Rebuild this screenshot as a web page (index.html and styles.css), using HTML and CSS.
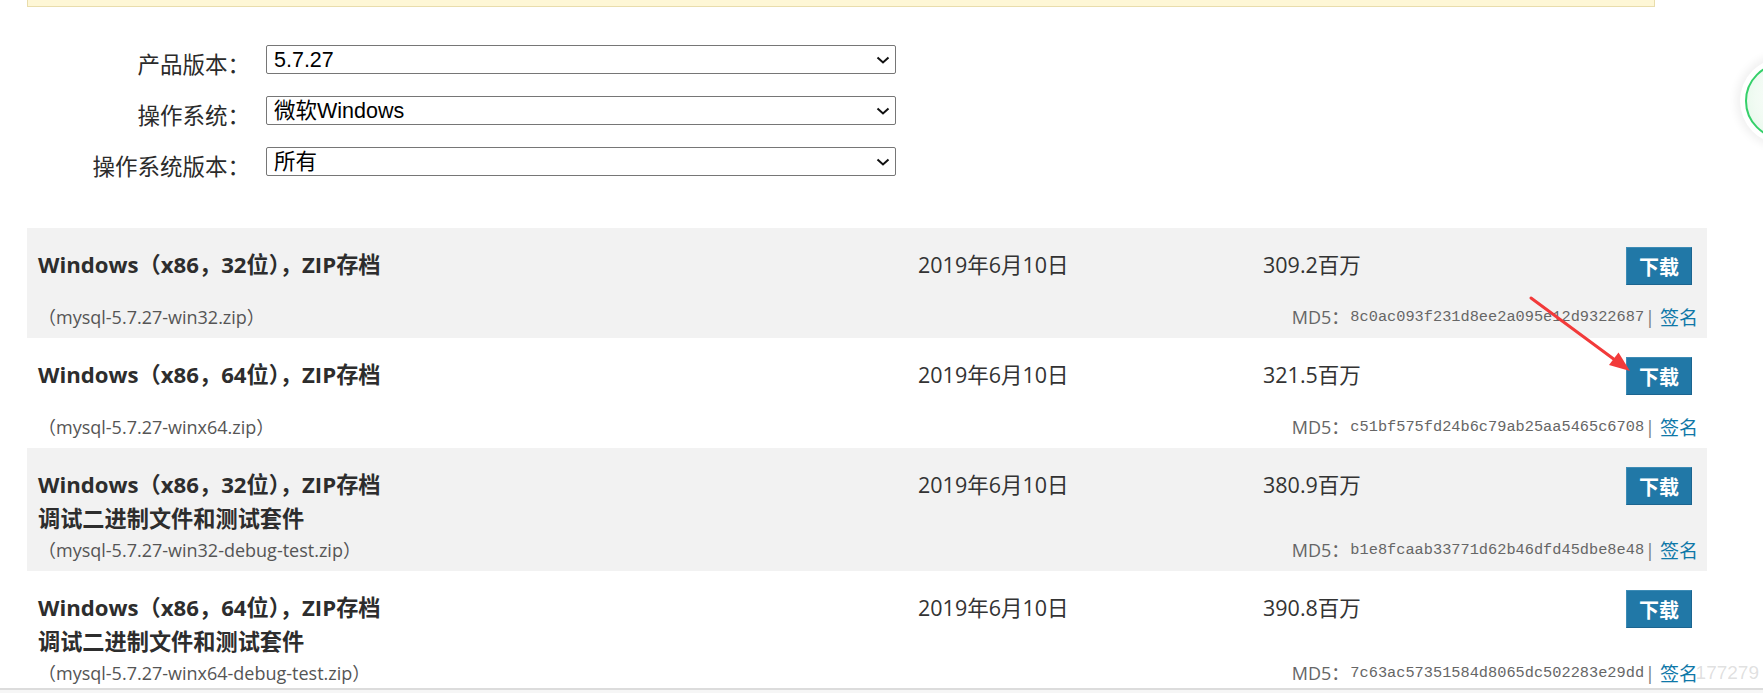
FILE: index.html
```html
<!DOCTYPE html>
<html lang="zh-CN">
<head>
<meta charset="utf-8">
<title>MySQL 下载</title>
<link rel="stylesheet" href="styles.css">
</head>
<body>
<div class="notice"></div>

<form class="filters">
  <label class="flabel" for="ver">产品版本：</label>
  <div class="selwrap">
    <select id="ver" class="sel"><option>5.7.27</option></select>
    <svg class="chev" viewBox="0 0 14 8" width="14" height="8"><path d="M1.5 1.5 L7 6.5 L12.5 1.5" fill="none" stroke="#111" stroke-width="2"/></svg>
  </div>
  <label class="flabel" for="os">操作系统：</label>
  <div class="selwrap">
    <select id="os" class="sel"><option>微软Windows</option></select>
    <svg class="chev" viewBox="0 0 14 8" width="14" height="8"><path d="M1.5 1.5 L7 6.5 L12.5 1.5" fill="none" stroke="#111" stroke-width="2"/></svg>
  </div>
  <label class="flabel" for="osv">操作系统版本：</label>
  <div class="selwrap">
    <select id="osv" class="sel"><option>所有</option></select>
    <svg class="chev" viewBox="0 0 14 8" width="14" height="8"><path d="M1.5 1.5 L7 6.5 L12.5 1.5" fill="none" stroke="#111" stroke-width="2"/></svg>
  </div>
</form>

<div class="files">
  <div class="file odd">
    <div class="top">
      <div class="c-title"><div>Windows（x86，32位），ZIP存档</div></div>
      <div class="c-date">2019年6月10日</div>
      <div class="c-size">309.2百万</div>
      <div class="c-btn"><a class="btn" href="#">下载</a></div>
    </div>
    <div class="bottom">
      <div class="fname">（mysql-5.7.27-win32.zip）</div>
      <div class="md5"><span class="md5l">MD5：</span><code>8c0ac093f231d8ee2a095e12d9322687</code><span class="bar">|</span><a class="sig" href="#">签名</a></div>
    </div>
  </div>

  <div class="file">
    <div class="top">
      <div class="c-title"><div>Windows（x86，64位），ZIP存档</div></div>
      <div class="c-date">2019年6月10日</div>
      <div class="c-size">321.5百万</div>
      <div class="c-btn"><a class="btn" href="#">下载</a></div>
    </div>
    <div class="bottom">
      <div class="fname">（mysql-5.7.27-winx64.zip）</div>
      <div class="md5"><span class="md5l">MD5：</span><code>c51bf575fd24b6c79ab25aa5465c6708</code><span class="bar">|</span><a class="sig" href="#">签名</a></div>
    </div>
  </div>

  <div class="file odd">
    <div class="top">
      <div class="c-title"><div>Windows（x86，32位），ZIP存档</div><div>调试二进制文件和测试套件</div></div>
      <div class="c-date">2019年6月10日</div>
      <div class="c-size">380.9百万</div>
      <div class="c-btn"><a class="btn" href="#">下载</a></div>
    </div>
    <div class="bottom">
      <div class="fname">（mysql-5.7.27-win32-debug-test.zip）</div>
      <div class="md5"><span class="md5l">MD5：</span><code>b1e8fcaab33771d62b46dfd45dbe8e48</code><span class="bar">|</span><a class="sig" href="#">签名</a></div>
    </div>
  </div>

  <div class="file">
    <div class="top">
      <div class="c-title"><div>Windows（x86，64位），ZIP存档</div><div>调试二进制文件和测试套件</div></div>
      <div class="c-date">2019年6月10日</div>
      <div class="c-size">390.8百万</div>
      <div class="c-btn"><a class="btn" href="#">下载</a></div>
    </div>
    <div class="bottom">
      <div class="fname">（mysql-5.7.27-winx64-debug-test.zip）</div>
      <div class="md5"><span class="md5l">MD5：</span><code>7c63ac57351584d8065dc502283e29dd</code><span class="bar">|</span><a class="sig" href="#">签名</a></div>
    </div>
  </div>
</div>

<svg class="arrow" width="120" height="90" viewBox="0 0 120 90">
  <path d="M11 8 L95 70" stroke="#f23a3a" stroke-width="3" stroke-linecap="round"/>
  <path d="M110 81 L89 75 L98.5 62.5 Z" fill="#f23a3a"/>
</svg>

<div class="float-ball"><div class="ring"></div></div>

<div class="watermark">177279</div>

<div class="hscroll"></div>
</body>
</html>
```

FILE: styles.css
```css
html, body {
  margin: 0;
  padding: 0;
  background: #ffffff;
  overflow: hidden;
}
body {
  width: 1763px;
  height: 693px;
  position: relative;
  font-family: "Open Sans", "Noto Sans CJK SC", sans-serif;
  color: #333;
}

.notice {
  margin-left: 27px;
  width: 1626px;
  height: 6px;
  background: #fef7d6;
  border: 1px solid #e9ddac;
  border-top: none;
}

.filters {
  margin-top: 38px;
  display: grid;
  grid-template-columns: 250px 630px;
  grid-auto-rows: 29px;
  column-gap: 16px;
  row-gap: 22px;
  align-items: start;
}
.flabel {
  text-align: right;
  font-family: "Noto Sans CJK SC", sans-serif;
  font-size: 22.5px;
  line-height: 36px;
  color: #2b2b2b;
  white-space: nowrap;
}
.selwrap {
  position: relative;
  height: 29px;
}
.sel {
  appearance: none;
  -webkit-appearance: none;
  box-sizing: border-box;
  width: 630px;
  height: 29px;
  margin: 0;
  padding: 1px 30px 0 7px;
  border: 1px solid #767676;
  border-radius: 2px;
  background: #fff;
  color: #000;
  font-family: "Liberation Sans", "Noto Sans CJK SC", sans-serif;
  font-size: 21.5px;
}
.chev {
  position: absolute;
  right: 6px;
  top: 11px;
  pointer-events: none;
}

.files {
  margin-top: 52px;
  margin-left: 27px;
  width: 1680px;
}
.file {
  padding: 0 15px 9px 11px;
  background: #ffffff;
}
.file.odd {
  background: #f2f2f2;
}
.top {
  display: flex;
  align-items: flex-start;
}
.c-title {
  width: 880px;
  padding: 20px 0 2px;
  font-size: 22.2px;
  font-weight: 700;
  line-height: 34px;
  color: #2d2d2d;
}
.c-date {
  width: 345px;
  padding-top: 20px;
  font-size: 21.5px;
  line-height: 34px;
  color: #333;
}
.c-size {
  flex: 1;
  padding-top: 20px;
  font-size: 21.5px;
  line-height: 34px;
  color: #333;
}
.c-btn {
  padding: 19px 0 20px;
}
.btn {
  display: flex;
  align-items: center;
  justify-content: center;
  box-sizing: border-box;
  width: 66px;
  height: 38px;
  background: #2178a7;
  border: 1px solid #1c6590;
  border-top-color: #3d8cb6;
  border-left-color: #3d8cb6;
  color: #fff;
  text-decoration: none;
  font-family: "Noto Sans CJK SC", sans-serif;
  font-weight: 700;
  font-size: 20px;
}
.bottom {
  display: flex;
  justify-content: space-between;
  align-items: center;
  height: 24px;
  margin-right: -6px;
}
.fname {
  font-size: 18px;
  color: #555;
  line-height: 24px;
}
.md5 {
  display: flex;
  align-items: center;
  font-size: 18px;
  line-height: 24px;
  color: #666;
}
.md5l {
  margin-right: 1px;
}
.md5 code {
  font-family: "Liberation Mono", "DejaVu Sans Mono", monospace;
  font-size: 15.3px;
  color: #666;
}
.bar {
  margin: 0 5px 0 1px;
  color: #777;
}
.sig {
  color: #0f78a8;
  text-decoration: none;
  font-family: "Noto Sans CJK SC", sans-serif;
  font-size: 19px;
}

.arrow {
  position: absolute;
  left: 1520px;
  top: 290px;
}

.float-ball {
  position: absolute;
  left: 1740px;
  top: 58px;
  width: 86px;
  height: 86px;
  border-radius: 50%;
  background: #fff;
  box-shadow: 0 0 8px 4px rgba(0, 0, 0, 0.06);
  display: flex;
  align-items: center;
  justify-content: center;
}
.ring {
  width: 72px;
  height: 72px;
  border-radius: 50%;
  border: 2px solid #35d06a;
  background: radial-gradient(circle at 60% 45%, #ffffff 0%, #f1fbf3 60%, #dff6e5 100%);
}

.watermark {
  position: absolute;
  right: 4px;
  top: 662px;
  font-family: "Liberation Sans", sans-serif;
  font-size: 19px;
  color: rgba(150, 150, 150, 0.3);
  white-space: nowrap;
}

.hscroll {
  position: absolute;
  left: 0;
  right: 0;
  bottom: 0;
  height: 3px;
  background: #f6f6f6;
  border-top: 2px solid #dcdcdc;
}
```
